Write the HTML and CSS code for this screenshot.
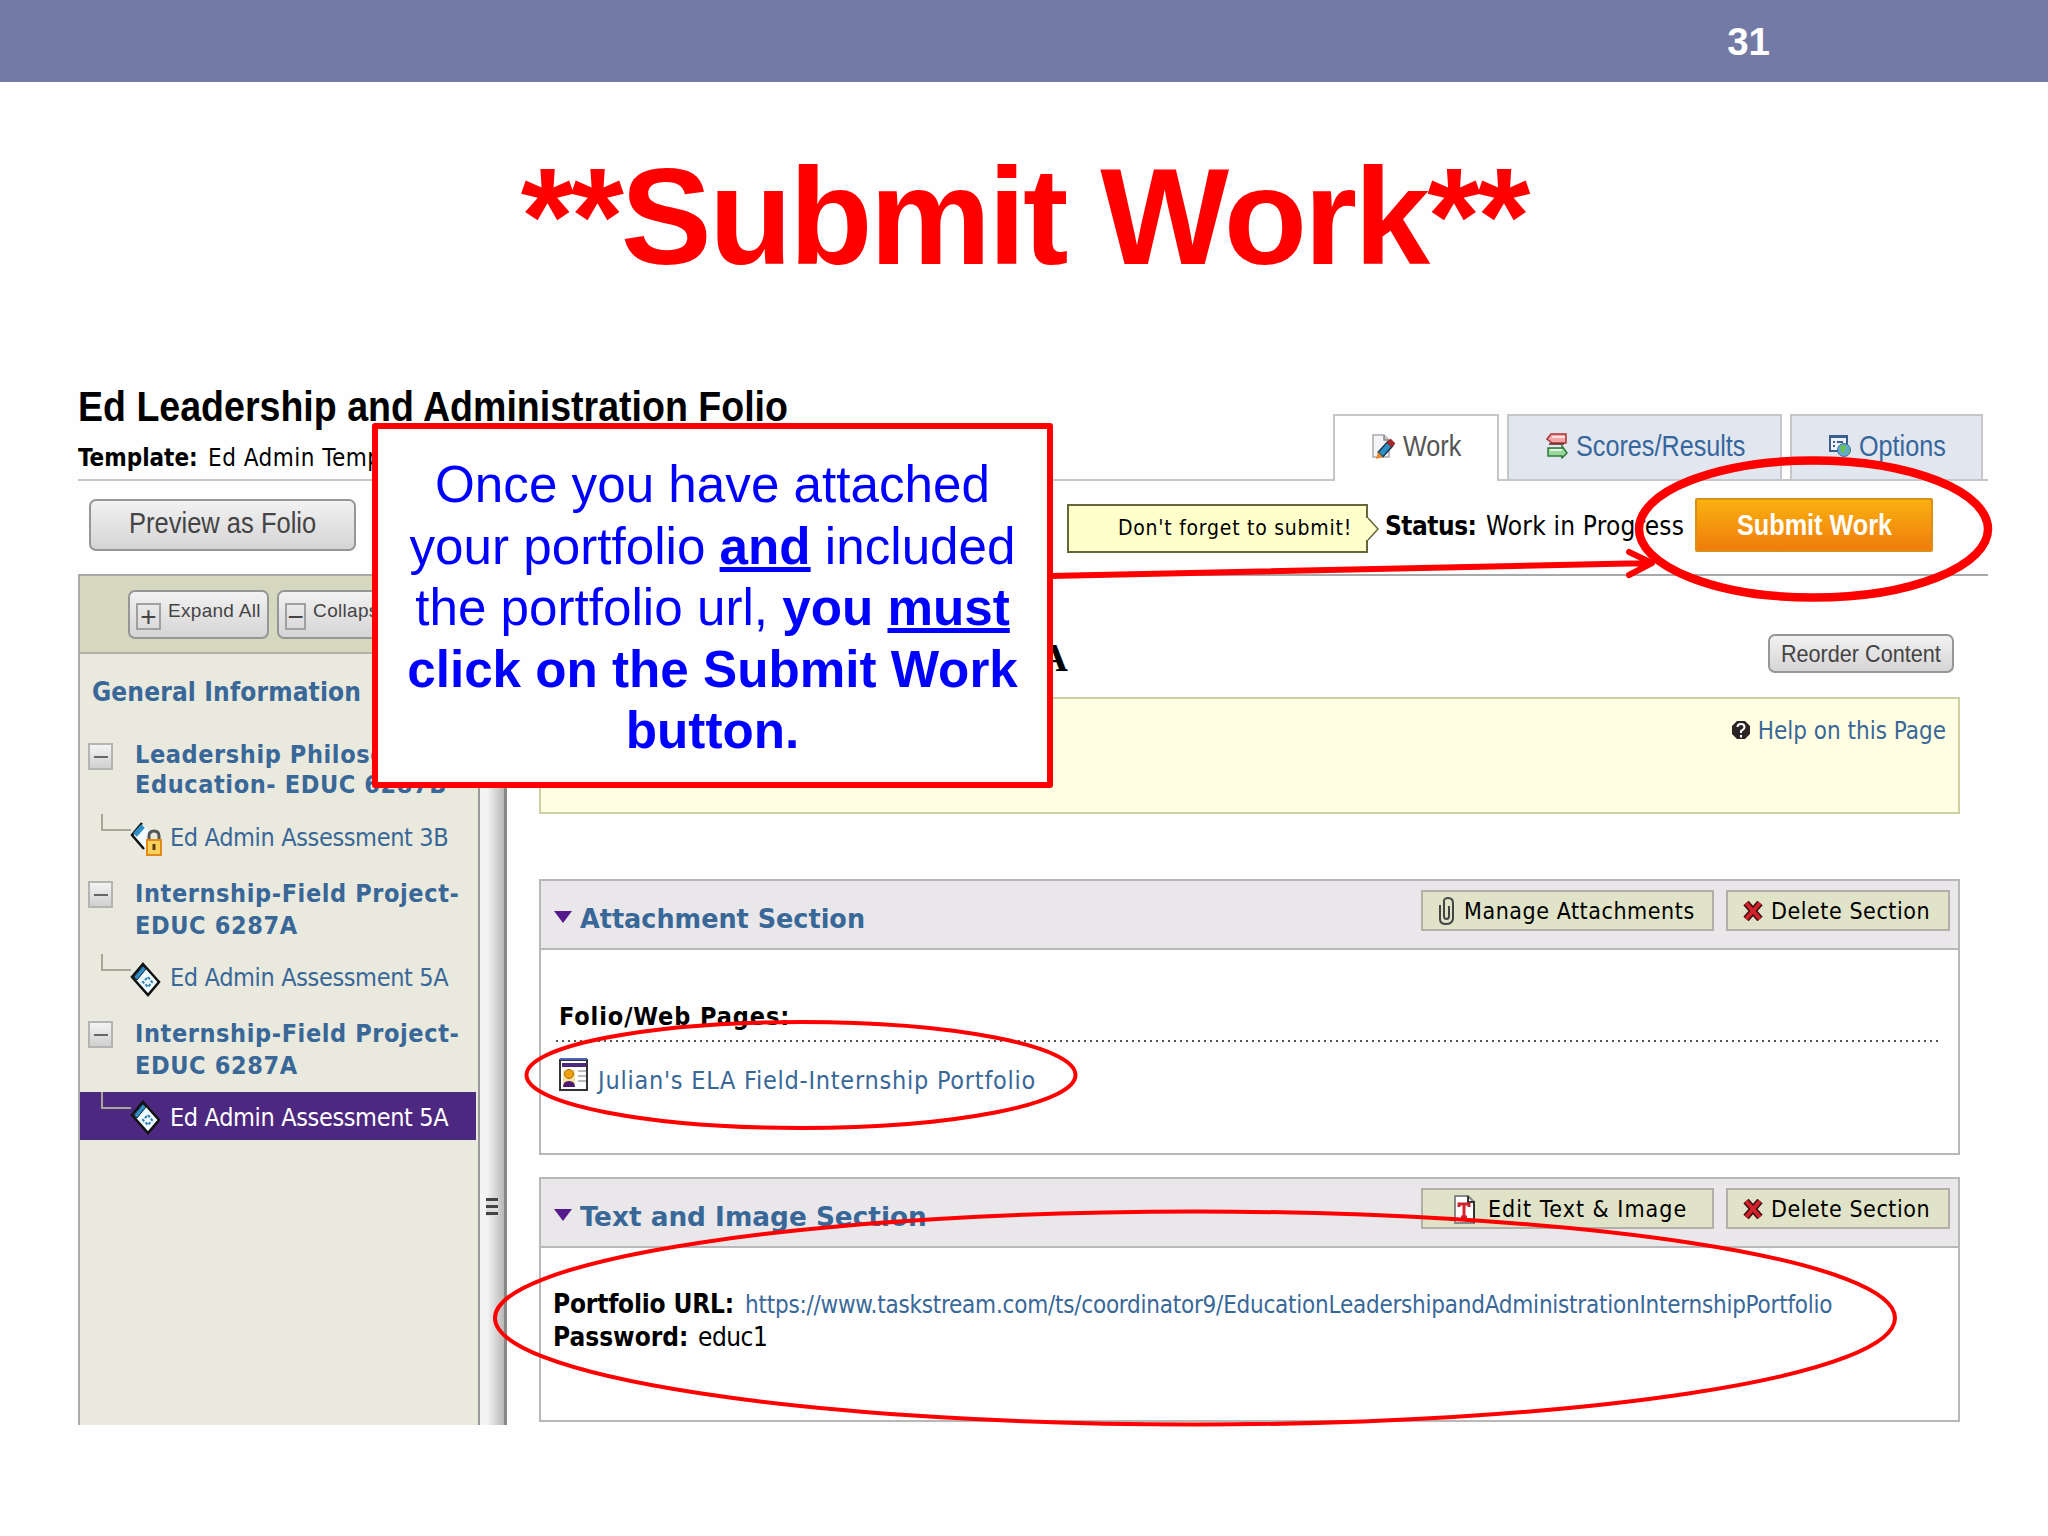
FILE: index.html
```html
<!DOCTYPE html>
<html lang="en">
<head>
    <meta charset="UTF-8">
    <title>Submit Work</title>
    <link rel="stylesheet" href="styles.css">
</head>
<body>

    <div class="topbar"><span class="page-number">31</span></div>

    <h1>**Submit Work**</h1>

    <div class="folio">
        <div class="masthead">
            <div class="folio-name">
                <div class="folio-title"><span class="t">Ed Leadership and Administration Folio</span></div>
                <div class="template"><b class="t">Template:</b><span class="t">Ed Admin Temp</span></div>
            </div>
            <div class="tabs">
                <div class="tab work active">
                    <svg width="24" height="26" viewBox="0 0 24 26">
                        <path d="M2 2h11l5 5v17H2z" fill="#f4f4f8" stroke="#aaa" stroke-width="1.5"/>
                        <path d="M13 2v5h5" fill="#ccc" stroke="#888" stroke-width="1.5"/>
                        <path d="M9 22L20 10" stroke="#16364f" stroke-width="8"/>
                        <path d="M10 21L18 12" stroke="#2f8fc4" stroke-width="5"/>
                        <path d="M18 12l4-4" stroke="#a02a2a" stroke-width="7"/>
                        <path d="M5 26l2-7 5 5z" fill="#e8862a"/>
                    </svg>
                    <span class="t">Work</span>
                </div>
                <div class="tab scores">
                    <svg width="22" height="26" viewBox="0 0 22 26">
                        <path d="M1 6l4-5h15v9H6z" fill="#f3a5a5" stroke="#a83434" stroke-width="1.5"/>
                        <path d="M6 4h13" stroke="#fbe0e0" stroke-width="2"/>
                        <path d="M21 20l-5 5v-2H2v-8h14v-2z" fill="#9bd69b" stroke="#2c7a3c" stroke-width="1.5"/>
                        <path d="M4 17h12" stroke="#e0f6e0" stroke-width="2"/>
                        <path d="M3 11h15" stroke="#5c2424" stroke-width="1.5"/>
                    </svg>
                    <span class="t">Scores/Results</span>
                </div>
                <div class="tab options">
                    <svg width="22" height="24" viewBox="0 0 22 24">
                        <path d="M1 2h17v15H1z" fill="#eef3fa" stroke="#3b5f8c" stroke-width="2"/>
                        <path d="M1 3h17M4 8h2M8 8h6M4 12h2" stroke="#3b5f8c" stroke-width="2"/>
                        <circle cx="15" cy="16" r="6.5" fill="#5fa8dc" stroke="#44708c"/>
                        <path d="M11 12l5-1 2 3-3 2 1 4-4-2zM18 17l3-1-2 4z" fill="#6cc04c"/>
                    </svg>
                    <span class="t">Options</span>
                </div>
            </div>
        </div>

        <div class="toolbar">
            <button class="gray-button preview"><span class="t">Preview as Folio</span></button>
            <div class="status-area">
                <div class="reminder">
                    <span class="t">Don't forget to submit!</span>
                    <svg class="reminder-tip" width="14" height="24" viewBox="0 0 14 24">
                        <path d="M0 1h2L12 12 2 23H0z" fill="#ffffcc"/>
                        <path d="M2 1L12 12 2 23" fill="none" stroke="#66663a" stroke-width="1.5"/>
                    </svg>
                </div>
                <div class="status"><b class="t">Status:</b><span class="t">Work in Progress</span></div>
                <button class="submit-button"><span class="t">Submit Work</span></button>
            </div>
        </div>

        <div class="panes">
            <div class="sidebar">
                <div class="sidebar-tools">
                    <button class="gray-button small"><i class="box">+</i><span class="t">Expand All</span></button>
                    <button class="gray-button small"><i class="box">&minus;</i><span class="t">Collapse All</span></button>
                </div>
                <div class="general"><span class="t">General Information</span></div>

                <div class="group first">
                    <i class="minus"></i>
                    <div><span class="t">Leadership Philosophy of</span><br><span class="t">Education- EDUC 6287B</span></div>
                </div>
                <div class="item">
                    <i class="branch"></i>
                    <svg width="34" height="36" viewBox="0 0 34 36">
                        <path d="M13 3L3 14l12 14 5-8V9z" fill="#f4fbff"/>
                        <path d="M12 1L2 13l12 14" fill="none" stroke="#111" stroke-width="2.5"/>
                        <path d="M13 4L5 13" stroke="#2f8fc4" stroke-width="5"/>
                        <path d="M19 19v-5q0-5 5-5t5 5v5" fill="none" stroke="#555" stroke-width="3"/>
                        <path d="M17 18h14v15H17z" fill="#fbd05a" stroke="#e08a1a" stroke-width="2"/>
                        <path d="M24 22v6" stroke="#5a3a10" stroke-width="3"/>
                    </svg>
                    <span class="t">Ed Admin Assessment 3B</span>
                </div>

                <div class="group second">
                    <i class="minus"></i>
                    <div><span class="t">Internship-Field Project-</span><br><span class="t">EDUC 6287A</span></div>
                </div>
                <div class="item">
                    <i class="branch"></i>
                    <svg width="34" height="36" viewBox="0 0 34 36">
                        <path d="M13 2L29 20 18 33 2 15z" fill="#effaff" stroke="#111" stroke-width="2.500"/>
                        <path d="M13 4l3 3L7 18l-3-3z" fill="#2f8fc4" stroke="#123" stroke-width="1"/>
                        <path d="M18 15l4 5-4 5-5-5z" fill="none" stroke="#2f7fb4" stroke-width="2" stroke-dasharray="3 1.500"/>
                    </svg>
                    <span class="t">Ed Admin Assessment 5A</span>
                </div>

                <div class="group third">
                    <i class="minus"></i>
                    <div><span class="t">Internship-Field Project-</span><br><span class="t">EDUC 6287A</span></div>
                </div>
                <div class="item selected">
                    <i class="branch"></i>
                    <svg width="34" height="36" viewBox="0 0 34 36">
                        <path d="M13 2L29 20 18 33 2 15z" fill="#effaff" stroke="#111" stroke-width="2.500"/>
                        <path d="M13 4l3 3L7 18l-3-3z" fill="#2f8fc4" stroke="#123" stroke-width="1"/>
                        <path d="M18 15l4 5-4 5-5-5z" fill="none" stroke="#2f7fb4" stroke-width="2" stroke-dasharray="3 1.500"/>
                    </svg>
                    <span class="t">Ed Admin Assessment 5A</span>
                </div>
            </div>

            <div class="splitter"><i class="grip"></i></div>

            <div class="content">
                <div class="content-head">
                    <h2>A</h2>
                    <button class="gray-button reorder"><span class="t">Reorder Content</span></button>
                </div>

                <div class="directions">
                    <svg width="20" height="20" viewBox="0 0 20 20">
                        <path d="M6 1h8l5 5v8l-5 5H6l-5-5V6z" fill="#2a2424"/>
                        <path d="M6.500 7q0-3 3.500-3t3.500 3q0 2-3.500 4v2M10 15v2.500" fill="none" stroke="#fff" stroke-width="2"/>
                    </svg>
                    <span class="t">Help on this Page</span>
                </div>

                <div class="section">
                    <div class="section-head">
                        <i class="arrow"></i>
                        <div class="section-title"><span class="t">Attachment Section</span></div>
                        <button class="tool manage">
                            <svg width="18" height="30" viewBox="0 0 18 30">
                                <path d="M2 9v14q0 5 6 5t7-5V7q0-5-5-5T6 7v13q0 3 2.500 3t2.500-3V10" fill="none" stroke="#444" stroke-width="2"/>
                            </svg>
                            <span class="t">Manage Attachments</span>
                        </button>
                        <button class="tool delete">
                            <svg width="20" height="20" viewBox="0 0 20 20">
                                <path d="M3 2l14 16M17 2L3 18" stroke="#3a0c0c" stroke-width="7"/>
                                <path d="M3 2l14 16M17 2L3 18" stroke="#d0232b" stroke-width="4"/>
                            </svg>
                            <span class="t">Delete Section</span>
                        </button>
                    </div>
                    <div class="section-body">
                        <div class="label"><b class="t">Folio/Web Pages:</b></div>
                        <div class="file">
                            <svg width="32" height="34" viewBox="0 0 32 34">
                                <path d="M2 2h27v30H2z" fill="#fff" stroke="#333" stroke-width="2"/>
                                <path d="M2 1h27" stroke="#4a62b8" stroke-width="2"/>
                                <path d="M4 7h24" stroke="#4d2880" stroke-width="4"/>
                                <path d="M20 13h8M20 18h8M20 23h8" stroke="#bbb" stroke-width="2"/>
                                <path d="M5 12h12v16H5z" fill="#f8e3a0"/>
                                <circle cx="11" cy="16" r="4.500" fill="#f0a010" stroke="#a86a08"/>
                                <path d="M5 29q0-6 6-6t6 6z" fill="#4d1a70"/>
                            </svg>
                            <span class="t">Julian's ELA Field-Internship Portfolio</span>
                        </div>
                    </div>
                </div>

                <div class="section last">
                    <div class="section-head">
                        <i class="arrow"></i>
                        <div class="section-title wide"><span class="t">Text and Image Section</span></div>
                        <button class="tool edit">
                            <svg width="23" height="30" viewBox="0 0 23 30">
                                <path d="M2 2h13l6 6v21H2z" fill="#fff" stroke="#888" stroke-width="2"/>
                                <path d="M15 2v6h6v21" fill="none" stroke="#333" stroke-width="2"/>
                                <path d="M6 13v-3h10v3M11 10v13M8 23h6" fill="none" stroke="#d0232b" stroke-width="3"/>
                            </svg>
                            <span class="t">Edit Text &amp; Image</span>
                        </button>
                        <button class="tool delete">
                            <svg width="20" height="20" viewBox="0 0 20 20">
                                <path d="M3 2l14 16M17 2L3 18" stroke="#3a0c0c" stroke-width="7"/>
                                <path d="M3 2l14 16M17 2L3 18" stroke="#d0232b" stroke-width="4"/>
                            </svg>
                            <span class="t">Delete Section</span>
                        </button>
                    </div>
                    <div class="section-body portfolio">
                        <div class="row"><b class="t">Portfolio URL:</b><span class="url t">https://www.taskstream.com/ts/coordinator9/EducationLeadershipandAdministrationInternshipPortfolio</span></div>
                        <div class="row"><b class="t">Password:</b><span class="t">educ1</span></div>
                    </div>
                </div>
            </div>
        </div>
    </div>

    <!-- red markup drawn over the folio -->
    <svg class="markup" width="2048" height="1536" viewBox="0 0 2048 1536">
        <path d="M1050 576L1652 563M1629 552L1652 563L1629 575" stroke-width="6"/>
        <ellipse cx="1813.500" cy="529" rx="174.500" ry="68.500" stroke-width="8.500"/>
        <ellipse cx="801" cy="1075" rx="274.500" ry="53" stroke-width="4"/>
        <ellipse cx="1195" cy="1318" rx="700" ry="106.500" stroke-width="4"/>
    </svg>

    <div class="callout">
        Once you have attached<br>
        your portfolio <b><u>and</u></b> included<br>
        the portfolio url, <b>you <u>must</u><br>
        click on the Submit Work<br>
        button.</b>
    </div>

</body>
</html>
```

FILE: styles.css
```css
body {
    margin: 0;
    width: 2048px;
    height: 1536px;
    overflow: hidden;
    position: relative;
    background-color: #fefefe;
    font-family: 'DejaVu Sans Condensed', 'DejaVu Sans', sans-serif;
    font-stretch: condensed;
}

i {
    font-style: normal;
}

svg {
    flex: none;
}

.t {
    display: inline-block;
    white-space: nowrap;
    transform-origin: left;
}

button {
    box-sizing: border-box;
    padding: 0;
    font-family: 'Liberation Sans', sans-serif;
}

.topbar {
    height: 82px;
    background-color: #747aa6;
    display: flex;
    justify-content: flex-end;
    align-items: center;
    padding-right: 278px;
}

.page-number {
    font: bold 38.5px/82px 'Liberation Sans', sans-serif;
    padding-top: 2px;
    color: white;
}

h1 {
    margin: 60px 0 88px;
    text-align: center;
    font: bold 136.5px/150px 'Liberation Sans', sans-serif;
    letter-spacing: -3px;
    color: #ff0000;
}

.folio {
    margin-left: 78px;
    width: 1910px;
}

/* title and tabs */
.masthead {
    height: 99px;
    display: flex;
    justify-content: space-between;
    border-bottom: 2px solid #c6c6ca;
}

.folio-title {
    padding-top: 3px;
    font: bold 42px/48px 'Liberation Sans', sans-serif;
}

.folio-title .t {
    transform: scaleX(0.894);
}

.template {
    padding-top: 12px;
    font-size: 24px;
    line-height: 30px;
}

.template b {
    width: 130px;
}

.template span {
    letter-spacing: 0.5px;
}

.tabs {
    display: flex;
    gap: 8px;
    align-items: flex-end;
    margin-right: 5px;
}

.tab {
    box-sizing: border-box;
    height: 65px;
    padding-bottom: 3px;
    display: flex;
    align-items: center;
    background-color: #e2e6ee;
    border: 2px solid #c6c6ca;
    border-bottom: none;
    font: 30px/36px 'Liberation Sans', sans-serif;
    color: #35679c;
}

.tab.active {
    height: 67px;
    padding-bottom: 5px;
    margin-bottom: -2px;
    background-color: #fefefe;
    color: #555;
}

.tab.work {
    width: 166px;
    padding-left: 36px;
}

.tab.scores {
    width: 275px;
    padding-left: 37px;
}

.tab.options {
    width: 193px;
    padding-left: 37px;
}

.tab svg {
    margin-right: 8px;
}

.tab .t {
    transform: scaleX(0.84);
}

/* preview button, status and submit */
.toolbar {
    height: 93px;
    display: flex;
    justify-content: space-between;
    border-bottom: 2px solid #a9a9a9;
}

.gray-button {
    border: 2px solid #969696;
    border-radius: 7px;
    background: linear-gradient(#f2f2f2, #d6d4d6);
    color: #444;
}

.preview {
    width: 267px;
    height: 52px;
    margin: 18px 0 0 11px;
    padding: 0 0 3px 38px;
    font-size: 29px;
    text-align: left;
}

.preview .t {
    transform: scaleX(0.88);
}

.status-area {
    display: flex;
    margin-right: 55px;
}

.reminder {
    position: relative;
    box-sizing: border-box;
    width: 301px;
    height: 49px;
    margin-top: 23px;
    padding-left: 49px;
    border: 2px solid #66663a;
    background-color: #ffffcc;
    font-size: 21px;
    line-height: 45px;
    letter-spacing: 0.75px;
}

.reminder-tip {
    position: absolute;
    left: 297px;
    top: 11px;
}

.status {
    width: 310px;
    margin: 23px 0 0 17px;
    font-size: 26px;
    line-height: 44px;
    letter-spacing: 0.2px;
}

.status b {
    width: 101px;
    letter-spacing: -0.5px;
}

.submit-button {
    width: 238px;
    height: 54px;
    margin-top: 17px;
    border: 2px solid #db8f16;
    border-radius: 2px;
    background: linear-gradient(#f9b110, #f07c0c);
    color: white;
    font-size: 29px;
    font-weight: bold;
    text-align: left;
    padding-left: 40px;
}

.submit-button .t {
    transform: scaleX(0.87);
}

.panes {
    display: flex;
    height: 849px;
}

/* left tree */
.sidebar {
    box-sizing: border-box;
    width: 400px;
    border-left: 2px solid #aaa;
    background-color: #e9e9de;
    color: #386798;
}

.sidebar-tools {
    box-sizing: border-box;
    height: 78px;
    display: flex;
    gap: 8px;
    padding: 14px 0 0 48px;
    background-color: #d5d7be;
    border-bottom: 2px solid #b0b0a8;
}

.small {
    width: 141px;
    height: 49px;
    display: flex;
    flex: none;
    padding: 11px 0 0 6px;
    font-size: 19px;
    line-height: 22px;
}

.small .t {
    margin-top: -3px;
    letter-spacing: 0.3px;
}

.box {
    box-sizing: border-box;
    width: 25px;
    height: 27px;
    margin-right: 7px;
    border: 2px solid #a0a0a0;
    font-size: 28px;
    line-height: 23px;
    text-align: center;
}

.general {
    padding: 20px 0 0 12px;
    font-size: 26px;
    font-weight: bold;
    line-height: 36px;
    letter-spacing: 0.15px;
}

.group {
    display: flex;
    margin-top: 16px;
    font-size: 25px;
    font-weight: bold;
    line-height: 32px;
    letter-spacing: 0.6px;
}

.group.first {
    margin-top: 30px;
    line-height: 30px;
}

.minus {
    box-sizing: border-box;
    width: 25px;
    height: 27px;
    margin: 3px 22px 0 8px;
    border: 2px solid #b4b4b0;
    background: linear-gradient(#666, #666) center / 14px 2px no-repeat, linear-gradient(#f4f4f4, #d0d0d0);
}

.item {
    display: flex;
    height: 48px;
    margin-top: 12px;
    font-size: 25px;
    line-height: 48px;
    letter-spacing: -0.36px;
}

.group.first + .item {
    margin-top: 14px;
}

.item .branch {
    width: 28px;
    height: 15px;
    margin-left: 21px;
    border-left: 2px solid #a8a698;
    border-bottom: 2px solid #a8a698;
}

.item svg {
    margin: 8px 6px 0 -1px;
}

.item.selected {
    width: 396px;
    margin-top: 10px;
    line-height: 51px;
    background-color: #4d2880;
    color: white;
}

.splitter {
    box-sizing: border-box;
    width: 29px;
    border-left: 2px solid #999;
    border-right: 3px solid #888;
    background: linear-gradient(to right, #f4f4f4 30%, #b8b8b8);
}

.grip {
    display: block;
    width: 12px;
    height: 18px;
    margin: 622px 0 0 6px;
    background: repeating-linear-gradient(#444 0 3px, #ddd 3px 7px);
}

/* right pane */
.content {
    width: 1421px;
    padding-left: 32px;
}

.content-head {
    display: flex;
    justify-content: space-between;
    height: 121px;
}

h2 {
    margin: 57px 0 0 500px;
    font: bold 40px/50px 'Liberation Serif', serif;
}

.reorder {
    width: 186px;
    height: 39px;
    margin: 58px 6px 0 0;
    font-size: 24px;
    text-align: left;
    padding-left: 11px;
}

.reorder .t {
    transform: scaleX(0.9);
}

.directions {
    box-sizing: border-box;
    height: 117px;
    display: flex;
    justify-content: flex-end;
    padding: 15px 12px 0 0;
    background-color: #fffee2;
    border: 2px solid #cdd0a0;
    font-size: 24px;
    line-height: 34px;
    color: #386798;
}

.directions svg {
    margin: 6px 7px 0 0;
}

.section {
    box-sizing: border-box;
    height: 276px;
    margin-top: 65px;
    border: 2px solid #b8b8b8;
}

.section.last {
    height: 245px;
    margin-top: 22px;
}

.section-head {
    height: 67px;
    display: flex;
    background-color: #e9e7e9;
    border-bottom: 2px solid #b8b8b8;
}

.arrow {
    width: 0;
    height: 0;
    margin: 30px 8px 0 13px;
    border: 9px solid transparent;
    border-top: 12px solid #551a8b;
    border-bottom: none;
}

.section-title {
    flex: 1;
    font-size: 26px;
    font-weight: bold;
    line-height: 77px;
    color: #386798;
}

.section-title .t {
    transform: scaleX(1.09);
}

.section-title.wide .t {
    transform: scaleX(1.125);
}

.tool {
    height: 41px;
    margin: 9px 0 0 12px;
    display: flex;
    align-items: center;
    background-color: #e0e3c8;
    border: 2px solid #b0b0a8;
    font-family: 'DejaVu Sans Condensed', 'DejaVu Sans', sans-serif;
    font-stretch: condensed;
    font-size: 23px;
    letter-spacing: 0.55px;
    color: black;
}

.tool.manage {
    width: 293px;
    padding-left: 15px;
}

.tool.edit {
    width: 293px;
    padding-left: 30px;
    letter-spacing: 1px;
}

.tool.edit svg {
    margin-right: 12px;
}

.tool.delete {
    width: 224px;
    margin-right: 8px;
    padding-left: 15px;
}

.tool svg {
    margin-right: 8px;
}

.label {
    height: 42px;
    margin: 0 17px 0 15px;
    padding: 46px 0 4px 3px;
    font-size: 25px;
    line-height: 42px;
    letter-spacing: 0.9px;
    background: repeating-linear-gradient(to right, #555 0 2px, transparent 2px 6px) bottom / 100% 2px no-repeat;
}

.file {
    display: flex;
    padding: 16px 0 0 17px;
    font-size: 25px;
    line-height: 46px;
    letter-spacing: 0.75px;
    color: #386798;
}

.file svg {
    margin-right: 8px;
}

.portfolio {
    padding: 40px 0 0 12px;
    font-size: 26px;
    line-height: 32px;
}

.row b {
    width: 145px;
}

.row:first-child b {
    width: 192px;
    letter-spacing: -0.2px;
}

.row .t + .t {
    letter-spacing: -0.5px;
}

.row .url.t {
    font-size: 24px;
    letter-spacing: -0.235px;
    color: #386798;
}

/* overlays */
.markup {
    position: absolute;
    left: 0;
    top: 0;
    fill: none;
    stroke: #ff0000;
    stroke-linecap: round;
    stroke-linejoin: round;
}

.callout {
    position: absolute;
    left: 372px;
    top: 423px;
    box-sizing: border-box;
    width: 681px;
    height: 365px;
    padding-top: 25px;
    border: 6px solid #ff0000;
    border-radius: 3px;
    background-color: #fefefe;
    text-align: center;
    font: 51.2px/61.5px 'Liberation Sans', sans-serif;
    color: #0000ff;
}
```
